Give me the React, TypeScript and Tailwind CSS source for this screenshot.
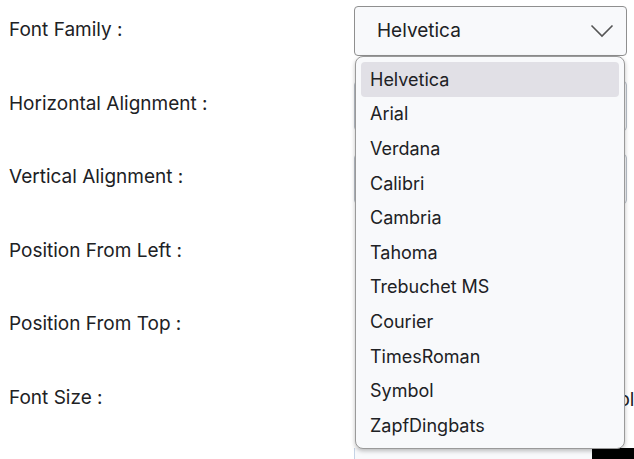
import React from "react";

const fonts = [
  "Helvetica",
  "Arial",
  "Verdana",
  "Calibri",
  "Cambria",
  "Tahoma",
  "Trebuchet MS",
  "Courier",
  "TimesRoman",
  "Symbol",
  "ZapfDingbats",
];

const labels = [
  "Font Family :",
  "Horizontal Alignment :",
  "Vertical Alignment :",
  "Position From Left :",
  "Position From Top :",
  "Font Size :",
];

export default function App() {
  return (
    <div
      className="relative w-[634px] h-[459px] overflow-hidden bg-white text-[#202124]"
      style={{ fontFamily: "Inter, 'Noto Sans', sans-serif" }}
    >
      <div className="flex flex-col pt-[6px]">
        {labels.map((l, i) => (
          <div key={l} className="flex h-[73.6px] items-start">
            <div className="w-[354px] pl-[9px] pt-[12px] text-[19px] leading-[24px]">{l}</div>
            {i === 0 ? (
              <div className="flex h-[50px] w-[273px] items-center justify-between rounded-[4px] border border-[#8f8f8f] bg-[#f8f9fb] pl-[22px] pr-[12px] text-[19px]">
                <span>Helvetica</span>
                <svg width="24" height="14" viewBox="0 0 24 14" fill="none">
                  <path d="M1.5 1.5 L12 12 L22.5 1.5" stroke="#555" strokeWidth="1.6" />
                </svg>
              </div>
            ) : i === 1 || i === 2 ? (
              <div className="mt-[1px] h-[50px] w-[273px] rounded-[4px] border border-[#b9c0c9] bg-[#f8f9fb]" />
            ) : i === 5 ? (
              <div className="relative mt-[1px] h-[50px] w-[273px]">
                <span className="absolute left-[252px] top-[11px] text-[19px]">Bol</span>
              </div>
            ) : (
              <div className="mt-[1px] h-[50px] w-[273px]" />
            )}
          </div>
        ))}
        <div className="flex h-[20px]">
          <div className="w-[354px]" />
          <div className="h-full w-[238px] border-l border-[#c5d3e6] bg-[#f8f9fb]" />
          <div className="h-full w-[42px] bg-black" />
        </div>
      </div>

      <div className="absolute left-[355px] top-[56px] w-[270px] h-[393px] rounded-[8px] border border-[#9a9a9a] bg-[#f8f9fb] p-[5px] shadow-[0_2px_4px_rgba(0,0,0,0.25)]">
        {fonts.map((f, i) => (
          <div
            key={f}
            className={`flex h-[34.6px] items-center rounded-[4px] pl-[9px] text-[18px] ${
              i === 0 ? "bg-[#e1e0e6]" : ""
            }`}
          >
            {f}
          </div>
        ))}
      </div>
    </div>
  );
}
